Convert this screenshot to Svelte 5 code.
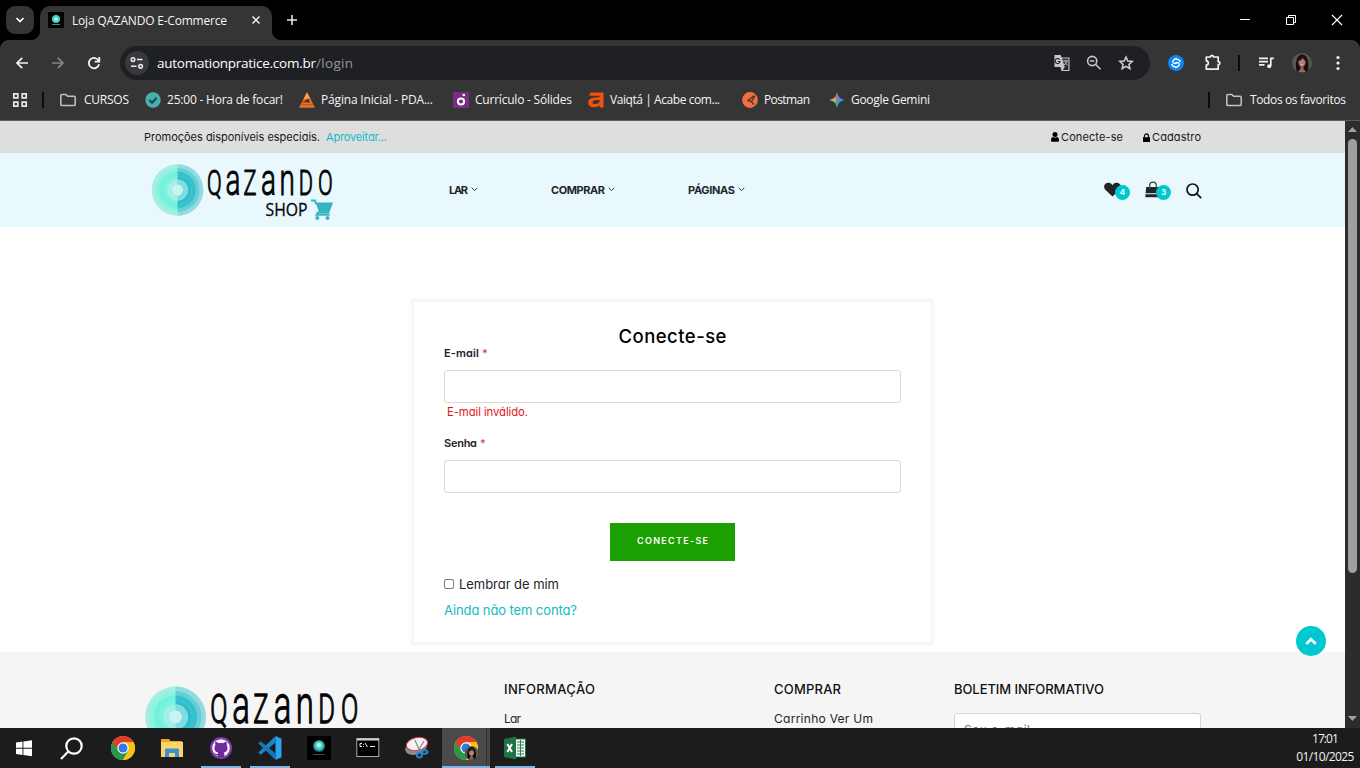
<script>
  const bookmarks = [
    { icon: 'folder', text: 'CURSOS', width: 45, slot: 45, gap: 8 },
    { icon: 'check', text: '25:00 - Hora de focar!', width: 116, slot: 116, gap: 6 },
    { icon: 'pda', text: 'Página Inicial - PDA...', width: 112, slot: 116, gap: 6 },
    { icon: 'solides', text: 'Currículo - Sólides', width: 97, slot: 97, gap: 6 },
    { icon: 'vaiqta', text: 'Vaiqtá | Acabe com...', width: 110, slot: 116, gap: 6 },
    { icon: 'postman', text: 'Postman', width: 46, slot: 49, gap: 6 },
    { icon: 'gemini', text: 'Google Gemini', width: 79, slot: 79, gap: 6 }
  ];
  const menu = [
    { text: 'LAR', width: 19, slot: 102 },
    { text: 'COMPRAR', width: 54, slot: 137 },
    { text: 'PÁGINAS', width: 47, slot: 80 }
  ];
  const apps = [
    { name: 'chrome' },
    { name: 'files' },
    { name: 'github', open: true },
    { name: 'vscode', open: true },
    { name: 'qazando' },
    { name: 'terminal' },
    { name: 'snip' },
    { name: 'chromeUser', open: true, active: true },
    { name: 'excel', open: true }
  ];

  // Tracks the letters so that a label spans the given width.
  function fit(node, width) {
    const count = [...node.textContent].length;
    const natural = node.getBoundingClientRect().width;
    node.style.letterSpacing = `${(width - natural) / (count - 1)}px`;
    node.style.width = `${width}px`;
  }
</script>

{#snippet label(text, width)}<span class="fit" use:fit={width}>{text}</span>{/snippet}

{#snippet folder()}
  <svg width="16" height="16" viewBox="0 0 16 16" fill="none" stroke="#c4c4c4" stroke-width="1.5" stroke-linejoin="round"><path d="M.8 3.6c0-.7.4-1.1 1.1-1.1h4l1.7 1.8h6.5c.7 0 1.1.4 1.1 1.1v7c0 .7-.4 1.1-1.1 1.1H1.9c-.7 0-1.1-.4-1.1-1.1z" /></svg>
{/snippet}

{#snippet logo(w, h)}
  <svg class="logo" width={w} height={h} viewBox="150 162 190 62">
    <circle cx="177.5" cy="190" r="25.8" fill="#a5eee2" />
    <path d="M177.500 164.200a25.800 25.800 0 0 1 0 51.600z" fill="#92dbe0" />
    <circle cx="177.500" cy="190" r="22" fill="#8bf3e0" />
    <path d="M177.500 168a22 22 0 0 1 0 44z" fill="#67cdd6" />
    <circle cx="177.500" cy="190" r="18.500" fill="#72f1dc" />
    <path d="M177.500 171.500a18.500 18.500 0 0 1 0 37z" fill="#38c1cc" />
    <circle cx="177.500" cy="190" r="14" fill="#7cf3df" />
    <path d="M177.500 176a14 14 0 0 1 0 28z" fill="#30bcc9" />
    <circle cx="177.500" cy="190" r="10.500" fill="#a3f0e4" />
    <path d="M177.500 179.500a10.500 10.500 0 0 1 0 21z" fill="#7ddde0" />
    <circle cx="177.500" cy="190" r="5.500" fill="#c9f3f1" />
    <g transform="translate(207 195.300) scale(.62 1)" class="word">
      <text><tspan class="cap" x="0">Q</tspan><tspan class="low" x="30">a</tspan><tspan class="cap" x="59">Z</tspan><tspan class="low" x="87">a</tspan><tspan class="low" x="117">n</tspan><tspan class="cap" x="148">D</tspan><tspan class="cap" x="179">O</tspan></text>
    </g>
    <text class="shop" x="265.500" y="216" textLength="42" lengthAdjust="spacingAndGlyphs">SHOP</text>
    <path d="M311 200.500h3.800l1.300 3h15.500l-3.300 9h-10.500l-1.200 2.200h13" fill="none" stroke="#35b6c1" stroke-width="2" />
    <path d="M316 203.500h15.500l-3.300 9h-9z" fill="#35b6c1" />
    <circle cx="317.300" cy="218" r="2" fill="#35b6c1" /><circle cx="327.500" cy="218" r="2" fill="#35b6c1" />
  </svg>
{/snippet}

{#snippet chromeMark()}
  <circle cx="12" cy="12" r="12" fill="#fbc116" />
  <path d="M1.600 6A12 12 0 0 0 12 24l5.200-9L12 12 6.800 15z" fill="#229a49" />
  <path d="M12 6h10.400A12 12 0 0 1 12 24l5.200-9z" fill="#fbc116" />
  <path d="M1.600 6 6.800 15 12 6z" fill="#229a49" />
  <path d="M1.600 6A12 12 0 0 1 22.400 6H12l-5.200 3-1 4.200z" fill="#e33b2e" />
  <circle cx="12" cy="12" r="5.700" fill="#fff" /><circle cx="12" cy="12" r="4.500" fill="#3079e8" />
{/snippet}

{#snippet portrait()}
  <circle cx="10" cy="10" r="10" fill="#5c5550" />
  <path d="M4.500 18C3 12 4 2 10 1.500 16.500 2 17 11 16 18a10 10 0 0 1-11.500 0z" fill="#17100f" />
  <ellipse cx="10" cy="9" rx="3.500" ry="5" fill="#b08070" />
  <path d="M6.300 8C6.500 4 9 3.500 10.500 4c2 .5 3 2 3.200 4-1.700-.7-2.700-2-3.200-3-.7 1.700-2.200 2.700-4.200 3z" fill="#1e1412" />
  <path d="M8.500 13.500h3V16l2.500 2.700a10 10 0 0 1-8 0L8.500 16z" fill="#94695b" />
  <path d="M8.500 11.200h3c-.5 1-2.500 1-3 0z" fill="#e8cfc8" />
{/snippet}

<div class="screen">
  <header class="browser">
    <div class="tabs">
      <button class="tabsearch" aria-label="Pesquisar guias"><svg width="10" height="10" viewBox="0 0 10 10" fill="none" stroke="#fff" stroke-width="1.700"><path d="m1.500 3 3.500 3.500L8.500 3" /></svg></button>
      <div class="tab">
        <svg width="16" height="16" viewBox="0 0 16 16"><rect width="16" height="16" fill="#000" /><circle cx="8" cy="7" r="4" fill="#43cfc6" /><circle cx="8" cy="7" r="2" fill="#a9f4e9" /><path d="M4 12.500h8" stroke="#4b8a87" stroke-width="1" /></svg>
        <span class="tabtitle">{@render label('Loja QAZANDO E-Commerce', 155)}</span>
        <svg class="close" width="8" height="8" viewBox="0 0 8 8" stroke="#eee" stroke-width="1.500"><path d="m.5.5 7 7m0-7-7 7" /></svg>
      </div>
      <svg class="plus" width="10" height="10" viewBox="0 0 10 10" stroke="#e8e8e8" stroke-width="1.600"><path d="M5 0v10M0 5h10" /></svg>
      <div class="window">
        <svg width="46" height="40" viewBox="0 0 46 40" stroke="#fff"><path d="M18 19.500h10" /></svg>
        <svg width="46" height="40" viewBox="0 0 46 40" fill="none" stroke="#fff"><path d="M18.500 17.500h7v7h-7zM20.500 17v-1.500h7v7H26" /></svg>
        <svg width="46" height="40" viewBox="0 0 46 40" stroke="#fff" stroke-width="1.200"><path d="m18 15 10 10m0-10L18 25" /></svg>
      </div>
    </div>

    <div class="toolbar">
      <svg class="tool" viewBox="0 0 36 34" fill="none" stroke="#f2f2f2" stroke-width="1.700"><path d="M24 17H13m5.200-5.200L13 17l5.200 5.200" /></svg>
      <svg class="tool" viewBox="0 0 36 34" fill="none" stroke="#858585" stroke-width="1.700"><path d="M12 17h11m-5.200-5.200L23 17l-5.200 5.200" /></svg>
      <svg class="tool" viewBox="0 0 36 34" fill="none" stroke="#f2f2f2" stroke-width="1.800"><path d="M22.800 15a5.200 5.200 0 1 0 .3 3.300M23.300 11v4.600h-4.600" /></svg>
      <div class="omnibox">
        <span class="siteinfo"><svg width="14" height="14" viewBox="0 0 14 14" fill="none" stroke="#eee" stroke-width="1.500"><circle cx="3" cy="3.600" r="1.800" /><path d="M7 3.600h5.500M1 10.200h5.500" /><circle cx="10.600" cy="10.200" r="1.800" /></svg></span>
        <span class="url">{@render label('automationpratice.com.br', 159)}<span class="path">{@render label('/login', 37)}</span></span>
        <svg width="32" height="34" viewBox="0 0 32 34"><path d="M8.500 9h6.300l.8 2.500h7.900V25h-8l-1-4H8.500z" fill="#c7c7c7" /><path d="M16 12.600h6.400V24h-5.600l2-3z" fill="#27282b" /><path d="M13.700 13.600a2.500 2.500 0 1 0 .4 1.900h-2.300" fill="none" stroke="#27282b" stroke-width="1.200" /><path d="M17 15h5m-2.500-1.200V15m1.600 0c-.4 1.800-1.500 3-3 3.800m.8-2.500 2.600 3" stroke="#c7c7c7" fill="none" /></svg>
        <svg width="32" height="34" viewBox="0 0 32 34" fill="none" stroke="#c7c7c7" stroke-width="1.600"><circle cx="14.200" cy="15" r="4.600" /><path d="m17.500 18.300 5 5M12 15h4.400" /></svg>
        <svg width="32" height="34" viewBox="0 0 32 34" fill="none" stroke="#d2d2d2" stroke-width="1.500"><path d="m16 11 1.800 4 4.400.4-3.300 3 1 4.300-3.900-2.300-3.900 2.300 1-4.300-3.300-3 4.400-.4z" /></svg>
      </div>
      <svg class="tool ext" viewBox="0 0 36 34"><circle cx="18" cy="17" r="8" fill="#0a86f5" /><path d="M18.500 12.500c-2 .4-4.500 2.300-3.500 4 .8 1.300 2.600 1.300 3.800.2M17.500 21.500c2-.4 4.500-2.300 3.500-4-.8-1.300-2.600-1.300-3.800-.2M13.800 18.300c.5 1.700 1.600 2.500 3.300 2.400m5.100-5c-.5-1.700-1.600-2.500-3.300-2.400" fill="none" stroke="#fff" stroke-width="1.300" stroke-linecap="round" /></svg>
      <svg class="tool" viewBox="0 0 36 34" fill="none" stroke="#f2f2f2" stroke-width="1.700" stroke-linejoin="round"><path d="M11.300 11h4.200c0-2.200 3-2.200 3 0h4.700v4.700c2.200 0 2.200 3 0 3v4.500H11.300v-4c2.700-.4 2.700-4 0-4.300z" /></svg>
      <i class="sep"></i>
      <svg class="tool" viewBox="0 0 36 34" fill="none" stroke="#f2f2f2" stroke-width="1.700"><path d="M11 12.300h9M11 15.600h9M11 18.900h5.500M22.800 20v-7.700h3" /><circle cx="21.200" cy="20.300" r="2" fill="#f2f2f2" stroke="none" /></svg>
      <span class="tool avatar"><svg width="20" height="20" viewBox="0 0 20 20">{@render portrait()}</svg></span>
      <svg class="tool" viewBox="0 0 36 34" fill="#f2f2f2"><circle cx="18" cy="11.500" r="1.600" /><circle cx="18" cy="17" r="1.600" /><circle cx="18" cy="22.500" r="1.600" /></svg>
    </div>

    <div class="bookmarks">
      <svg width="16" height="16" viewBox="0 0 16 16" fill="none" stroke="#e8e8e8" stroke-width="1.700"><path d="M1.800 1.800h4v4h-4zM10.200 1.800h4v4h-4zM1.800 10.200h4v4h-4zM10.200 10.200h4v4h-4z" /></svg>
      <i class="bar"></i>
      {#each bookmarks as b}
        <span class="bookmark" style:gap="{b.gap}px">
          {#if b.icon === 'folder'}
            {@render folder()}
          {:else}
            <svg width="16" height="16" viewBox="0 0 16 16">
              {#if b.icon === 'check'}
                <circle cx="8" cy="8" r="7.700" fill="#46b0ae" /><path d="m4.300 8 2.700 2.700 4.700-5" fill="none" stroke="#23424d" stroke-width="2" />
              {:else if b.icon === 'pda'}
                <path d="M8 .3 16 15.700H0z" fill="#e57124" /><path d="M8 .3 11.300 6.700H4.700z" fill="#f3a43b" /><path d="M3.500 10.500 9.500 6.500l1.700 4.500-2.700-.7z" fill="#54311f" /><path d="M1.500 12.600h13" stroke="#a9501f" stroke-width=".8" />
              {:else if b.icon === 'solides'}
                <rect width="16" height="16" fill="#7b2c82" /><circle cx="8" cy="9.500" r="3.100" fill="none" stroke="#fff" stroke-width="2" /><circle cx="10.800" cy="3" r="1.300" fill="#fff" />
              {:else if b.icon === 'vaiqta'}
                <path d="M2.500.5h13v15h-4V13C9.500 16 .3 16.800.3 10.500.3 6 5 5.200 11.500 5.200V3.800H1z" fill="#f4500b" /><path d="M11.500 8c-4 0-7 .2-7 2.400s5 2.400 7-.6z" fill="#353535" />
              {:else if b.icon === 'postman'}
                <circle cx="8" cy="8" r="7.900" fill="#f2703f" /><path d="m12.500 3.500-6.500 5 3.500 1.200 2.500 3M12.800 4.500 9.500 9.500" fill="none" stroke="#3e302c" stroke-width="1.300" />
              {:else}
                <defs><linearGradient id="gem" x1="0" y1="1" x2="1" y2="0"><stop offset=".2" stop-color="#e9c13d" /><stop offset=".42" stop-color="#48a878" /><stop offset=".58" stop-color="#3f8cf0" /><stop offset=".85" stop-color="#ee5b50" /></linearGradient></defs>
                <path d="M8 .5C9 4.700 11.300 7 15.500 8 11.300 9 9 11.300 8 15.500 7 11.300 4.700 9 .5 8 4.700 7 7 4.700 8 .5z" fill="#3d8cf3" />
                <path d="M8 .5C9 4.700 9.500 6 10.500 6.800L8 8l-1 1-3.300-1.900C6 6.300 7.300 4.200 8 .5z" fill="#c76a86" />
                <path d="M.5 8c2.500-.6 4-1.500 5.500-2.500L7.500 8 6 10.600C4.700 9.300 3 8.600.5 8z" fill="#d9b33f" />
                <path d="M6 10.600 8 8l1 1.500-.3 3.300L8 15.500c-.5-2-1.200-3.800-2-4.900z" fill="#48a878" />
              {/if}
            </svg>
          {/if}
          <span class="slot" style:width="{b.slot}px">{@render label(b.text, b.width)}</span>
        </span>
      {/each}
      <i class="bar last"></i>
      <span class="bookmark all">{@render folder()}{@render label('Todos os favoritos', 96)}</span>
    </div>
  </header>

  <div class="viewport">
    <div class="page">
      <div class="promo">
        {@render label('Promoções disponíveis especiais.', 176)}
        <a class="teal" href="#promo">{@render label('Aproveitar...', 61)}</a>
        <a class="account" href="#login"><svg width="8" height="10" viewBox="0 0 8 10"><circle cx="4" cy="2.600" r="2.500" /><path d="M0 8.300C0 6 1 4.900 2 4.900c1.300.9 2.700.9 4 0 1 0 2 1.100 2 3.400 0 1-.5 1.500-1.400 1.500H1.400C.5 9.800 0 9.300 0 8.300z" /></svg>{@render label('Conecte-se', 62)}</a>
        <a href="#cadastro"><svg width="7" height="9" viewBox="0 0 7 9"><path d="M0 4.200h7V9H0z" /><path d="M1.500 4.500V3a2 2 0 0 1 4 0v1.500" fill="none" stroke="#111" stroke-width="1.300" /></svg>{@render label('Cadastro', 49)}</a>
      </div>

      <nav>
        {@render logo(190, 62)}
        <div class="menu">
          {#each menu as m}
            <a href="#menu" style:width="{m.slot}px">{@render label(m.text, m.width)}<svg width="7" height="5" viewBox="0 0 7 5" fill="none" stroke="#222" stroke-width=".9"><path d="m.7.800 2.800 2.800L6.300.800" /></svg></a>
          {/each}
        </div>
        <div class="cart">
          <span class="count"><svg width="17" height="15" viewBox="0 0 17 15" fill="#212529"><path d="M8.500 14.500 1.300 7.700C-1.700 4 1.500.3 4.700.8 6.500 1 7.700 2 8.500 3.200 9.300 2 10.500 1 12.300.8c3.200-.5 6.400 3.200 3.400 6.900z" /></svg><b>4</b></span>
          <span class="count bag"><svg width="16" height="17" viewBox="0 0 16 17"><path d="M1.200 6h13.600l.6 6.300H.6zM.5 13.300h15l.2 3H.3z" fill="#212529" /><path d="M4.700 8V4.500a3.300 3.300 0 0 1 6.600 0V8" fill="none" stroke="#3a3e42" stroke-width="1.200" /></svg><b>3</b></span>
          <svg width="16" height="16" viewBox="0 0 16 16" fill="none" stroke="#111" stroke-width="1.700"><circle cx="6.600" cy="6.600" r="5.600" /><path d="m10.600 10.600 4.600 4.600" /></svg>
        </div>
      </nav>

      <main>
        <form class="card">
          <h2>{@render label('Conecte-se', 108)}</h2>
          <div class="field">{@render label('E-mail', 35)}<em>*</em></div>
          <input aria-label="E-mail" />
          <div class="error">{@render label('E-mail inválido.', 81)}</div>
          <div class="field">{@render label('Senha', 33)}<em>*</em></div>
          <input aria-label="Senha" />
          <button type="button" class="submit">{@render label('CONECTE-SE', 71)}</button>
          <div class="remember"><i></i>{@render label('Lembrar de mim', 100)}</div>
          <a class="teal signup" href="#cadastro">{@render label('Ainda não tem conta?', 133)}</a>
        </form>
      </main>

      <footer>
        <div class="brand">{@render logo(224, 73)}</div>
        <div class="col info"><h3>{@render label('INFORMAÇÃO', 91)}</h3><p>{@render label('Lar', 17)}</p></div>
        <div class="col buy"><h3>{@render label('COMPRAR', 67)}</h3><p>{@render label('Carrinho Ver Um', 99)}</p></div>
        <div class="col news"><h3>{@render label('BOLETIM INFORMATIVO', 150)}</h3><div class="mail">{@render label('Seu e-mail', 66)}</div></div>
      </footer>
      <a class="totop" href="#top" aria-label="Topo"><svg width="12" height="9" viewBox="0 0 12 9" fill="none" stroke="#fff" stroke-width="2.800"><path d="m1.200 7 4.800-4.700L10.800 7" /></svg></a>
    </div>
    <div class="scroll">
      <svg width="9" height="5" viewBox="0 0 9 5" fill="#a0a0a0"><path d="m4.500 0 4.500 5H0z" /></svg>
      <i></i>
      <svg width="9" height="5" viewBox="0 0 9 5" fill="#a0a0a0"><path d="M0 0h9L4.500 5z" /></svg>
    </div>
  </div>

  <div class="taskbar">
    <span class="start"><svg width="16" height="17" viewBox="0 0 16 17" fill="#fff"><path d="M0 2.500 6.500 1.600v6.200H0zM7.400 1.500 16 .3v7.500H7.400zM0 8.800h6.500V15L0 14.100zM7.400 8.800H16v7.500l-8.600-1.200z" /></svg></span>
    <span class="find"><svg width="23" height="23" viewBox="0 0 23 23" fill="none" stroke="#fff" stroke-width="2.200"><circle cx="14" cy="9" r="7.700" /><path d="m8.300 14.500-7.300 7.500" /></svg></span>
    {#each apps as app}
      <span class="app" class:open={app.open} class:active={app.active}>
        <svg width="24" height="24" viewBox="0 0 24 24">
          {#if app.name === 'chrome'}
            {@render chromeMark()}
          {:else if app.name === 'files'}
            <path d="M1 3h8l1.500 2H22v16H1z" fill="#e8a825" /><path d="M1 6h22v15H1z" fill="#fbd56c" /><path d="M5 21v-7c0-1 .6-1.500 1.500-1.500h11c.9 0 1.500.5 1.500 1.500v7h-4v-4H9v4z" fill="#3c91cd" />
          {:else if app.name === 'github'}
            <circle cx="12" cy="12" r="11" fill="#7f3bab" /><circle cx="12" cy="12" r="8.800" fill="#f8f3fb" /><path d="M6.500 6c1.600 0 2.600.7 3.300 1.300 1.500-.3 2.900-.3 4.400 0 .7-.6 1.700-1.300 3.300-1.300.5 1.300.4 2.300.1 3 2.200 4 .4 7-3 7.500.7.600.8 1.500.8 2.500v2.300h-6.800v-2.300c-2.500.5-2.800-1.500-4.200-2 1.900-.4 2.200 1.500 4.300.9.100-.6.300-1 .7-1.400-3.400-.5-5.200-3.500-3-7.500-.4-.9-.400-2 .1-3z" fill="#6d2c99" />
          {:else if app.name === 'vscode'}
            <path d="m17.500 0 6 2.700v18.600l-6 2.700z" fill="#2aa4ee" /><path d="M17.500 0v6.500L2.700 18.700.3 16.500z" fill="#1b83c8" /><path d="M.3 7.300 2.700 5.200 17.500 17.500V24z" fill="#1478bb" />
          {:else if app.name === 'qazando'}
            <rect width="24" height="24" fill="#000" /><circle cx="12" cy="10" r="6" fill="#237d7a" /><circle cx="12" cy="9.500" r="4.600" fill="#46cfc1" /><circle cx="12" cy="9" r="2.300" fill="#b5f7e9" /><path d="M6.500 18.500h11" stroke="#69706f" stroke-width="1.200" stroke-dasharray="1.200 .5" />
          {:else if app.name === 'terminal'}
            <rect x=".8" y="2.500" width="22" height="18" fill="#020202" stroke="#a9a9a9" /><path d="M1 3.500h22" stroke="#d2d2d2" stroke-width="2" /><path d="M6 7.500H4v3h2M7.500 8v.8m0 1.200v.8M9 7l2.500 4M14 10.500h5" stroke="#eee" fill="none" />
          {:else if app.name === 'snip'}
            <ellipse cx="11" cy="12" rx="11" ry="6.500" transform="rotate(-15 11 12)" fill="#918b91" /><ellipse cx="12" cy="8" rx="10.800" ry="6.500" transform="rotate(-12 12 8)" fill="#f4f1f2" stroke="#c6354b" /><path d="m10 4 5 12m4-11-6 10" stroke="#83929a" stroke-width="1.300" /><circle cx="14.500" cy="19" r="2.500" fill="none" stroke="#2587c5" stroke-width="2" /><ellipse cx="19.500" cy="16" rx="3" ry="1.800" fill="none" stroke="#2587c5" stroke-width="2" />
          {:else if app.name === 'chromeUser'}
            {@render chromeMark()}
            <svg x="10.500" y="9.500" width="14" height="15" viewBox="0 0 20 20">{@render portrait()}</svg>
          {:else}
            <path d="M12 3h10.500v18H12z" fill="#f5f9f6" stroke="#237446" /><path d="M14 6h7m-7 3h7m-7 3h7m-7 3h7m-7 3h7M17.500 4v16" stroke="#2d8151" stroke-width="1" /><path d="m1 3 12-2.500v23L1 21z" fill="#1e7245" /><path d="m4.300 8 4.700 8m0-8-4.700 8" stroke="#fff" stroke-width="2" />
          {/if}
        </svg>
      </span>
    {/each}
    <div class="clock"><div>{@render label('17:01', 27)}</div><div>{@render label('01/10/2025', 58)}</div></div>
  </div>
</div>

<style>
  :global(body) { margin: 0; overflow: hidden; }
  * { box-sizing: border-box; }
  svg { display: block; flex: none; }
  a { color: inherit; text-decoration: none; }
  .fit { display: inline-block; white-space: pre; }
  .screen { width: 1360px; height: 768px; display: flex; flex-direction: column; overflow: hidden; font: 12px/16px "Open Sans", "Noto Sans", sans-serif; color: #f4f4f4; }

  .browser { height: 121px; flex: none; background: #353535; border-bottom: 1px solid #5d5b5d; }
  .tabs { height: 40px; background: #000; display: flex; padding: 6px 0 0 6px; }
  .tabsearch { width: 28px; height: 28px; border: 0; border-radius: 9px; background: #353535; display: grid; place-items: center; padding: 0; }
  .tab { position: relative; width: 232px; height: 34px; margin-left: 6px; padding: 0 12px 6px 8px; border-radius: 10px 10px 0 0; background: #353535; display: flex; align-items: center; }
  .tab::before, .tab::after { content: ""; position: absolute; bottom: 0; width: 8px; height: 8px; }
  .tab::before { left: -8px; background: radial-gradient(circle at 0 0, #000 7.500px, #353535 8px); }
  .tab::after { right: -8px; background: radial-gradient(circle at 100% 0, #000 7.500px, #353535 8px); }
  .tabtitle { margin: 1px 0 0 8px; }
  .close { margin-left: auto; }
  .plus { margin: 9px 0 0 15px; }
  .window { display: flex; margin: -6px 0 0 auto; }
  .toolbar { height: 40px; padding: 6px 4px 0; display: flex; background: radial-gradient(circle at 8px 8px, transparent 7.500px, #000 8px) 0 0 / 8px 8px no-repeat, radial-gradient(circle at 0 8px, transparent 7.500px, #000 8px) 100% 0 / 8px 8px no-repeat; }
  .tool { width: 36px; height: 34px; flex: none; }
  .omnibox { width: 1030px; height: 34px; margin-left: 8px; padding: 0 8px 0 5px; border-radius: 17px; background: #1f2024; display: flex; align-items: center; }
  .siteinfo { width: 24px; height: 24px; border-radius: 50%; background: #38393b; display: grid; place-items: center; }
  .url { display: flex; flex: 1; margin-left: 8px; font-size: 13.500px; color: #fff; }
  .path { color: #96979a; display: flex; }
  .ext { margin: 0 1px 0 8px; }
  .sep { width: 2px; height: 16px; margin: 9px 8px 0 7px; background: #0c0c0c; flex: none; }
  .avatar { display: grid; place-items: center; }
  .bookmarks { height: 40px; display: flex; align-items: center; gap: 16px; padding: 0 14px 0 12px; }
  .bar { width: 2px; height: 16px; background: #0b0b0b; margin-left: -2px; }
  .last { margin-left: auto; }
  .bookmark { display: flex; align-items: center; white-space: nowrap; }
  .slot { display: flex; }
  .all { gap: 8px; }

  .viewport { flex: 1; min-height: 0; display: flex; font-family: Inter, "Liberation Sans", sans-serif; font-feature-settings: "cv11"; color: #222529; }
  .page { position: relative; width: 1345px; background: #fff; overflow: hidden; display: flex; flex-direction: column; }
  .promo { height: 32px; flex: none; background: #dedede; display: flex; align-items: center; padding: 0 144px; font-size: 11px; color: #16181a; }
  .promo a { display: flex; align-items: center; gap: 2px; margin-left: 20px; }
  .promo a.teal { margin-left: 6px; }
  .promo a.account { margin-left: auto; }
  .teal, .promo a.teal { color: #10bcc2; }
  nav { height: 74px; flex: none; background: #e8f8fc; display: flex; align-items: center; padding: 0 143px 0 150px; }
  .logo { overflow: visible; }
  nav > :global(.logo) { margin-top: 6px; }
  .menu { display: flex; margin: -1px 0 0 109px; font-size: 11px; font-weight: 700; }
  .menu a { display: flex; align-items: center; gap: 3px; }
  .cart { display: flex; align-items: center; margin: 1px 0 0 auto; }
  .count { position: relative; width: 41px; height: 20px; }
  .count b { position: absolute; left: 11px; top: 4px; width: 15px; height: 15px; border-radius: 50%; background: #00c8cf; color: #fff; font-size: 8px; line-height: 15px; text-align: center; }
  .count svg { margin-top: 1px; }
  .count.bag svg { margin-top: 0; }

  main { height: 425px; flex: none; padding: 75px 0 0 414px; }
  .card { width: 517px; height: 340px; padding: 22px 30px; box-shadow: 0 0 3px 3px #f6f6f6; display: flex; flex-direction: column; }
  h2 { height: 24px; margin: 0; text-align: center; font-size: 18.500px; line-height: 24px; font-weight: 500; color: #000; }
  .field { height: 10px; margin-bottom: 12px; display: flex; gap: 3px; font-size: 11px; line-height: 10px; font-weight: 600; }
  .field em { color: #d83b42; font-style: normal; font-weight: 500; }
  input { width: 457px; height: 33px; border: 1px solid #d9d9d9; border-radius: 3px; background: #fff; padding: 0; }
  .error { height: 35px; padding: 1px 0 0 3px; font-size: 11.300px; color: #e01420; }
  .submit { width: 125px; height: 38px; margin: 30px auto 0; padding: 0 0 3px; border: 0; background: #1c9f00; color: #fff; font: 600 9px/12px Inter, sans-serif; flex: none; }
  .remember { display: flex; align-items: center; gap: 5px; height: 18px; margin-top: 14px; font-size: 13px; }
  .remember i { width: 10px; height: 10px; border: 1px solid #777; border-radius: 2px; }
  .signup { margin-top: 8px; font-size: 13px; line-height: 18px; }

  footer { flex: 1; background: #f5f5f5; display: flex; padding-left: 143px; overflow: hidden; }
  .brand { width: 361px; padding-top: 32px; }
  .info { width: 270px; }
  .buy { width: 180px; }
  h3 { margin: 28px 0 0; font-size: 13px; line-height: 18px; font-weight: 500; color: #111; }
  .col p { margin: 12px 0 0; font-size: 12px; line-height: 18px; }
  .mail { width: 247px; height: 33px; margin-top: 15px; padding: 7px 9px; border: 1px solid #ced4da; border-radius: 3px; background: #fff; color: #777; font-size: 12px; line-height: 18px; }
  .totop { position: absolute; left: 1296px; top: 505px; width: 30px; height: 30px; border-radius: 50%; background: #00c8d0; display: grid; place-items: center; }
  .scroll { width: 15px; background: #2c2c2c; display: flex; flex-direction: column; align-items: center; padding: 6px 0 7px; }
  .scroll i { width: 9px; height: 434px; margin: 7px 0 auto; border-radius: 5px; background: #9f9f9f; }

  .word { font-family: Roboto, sans-serif; font-weight: 300; fill: #050505; stroke: #050505; stroke-width: 1.100px; }
  .cap { font-size: 35px; }
  .low { font-size: 45px; }
  .shop { font: 400 18px "Open Sans", sans-serif; fill: #050505; stroke: #050505; stroke-width: .3px; }

  .taskbar { height: 40px; flex: none; background: #1c1c1c; display: flex; gap: 1px; padding-right: 6px; }
  .taskbar > span { width: 48px; height: 40px; display: grid; place-items: center; }
  .taskbar .find { width: 49px; padding-right: 5px; }
  .app.open { background: linear-gradient(#79b6ea, #79b6ea) 50% 100% / 40px 2px no-repeat; }
  .taskbar .app.active { background: linear-gradient(#79b6ea, #79b6ea) 50% 100% / 48px 2px no-repeat, linear-gradient(90deg, #4a4a4a 44px, #333 44px, #333 45px, #484848 45px); }
  .clock { margin-left: auto; text-align: center; padding-top: 2px; font-size: 12px; line-height: 18px; }
</style>
